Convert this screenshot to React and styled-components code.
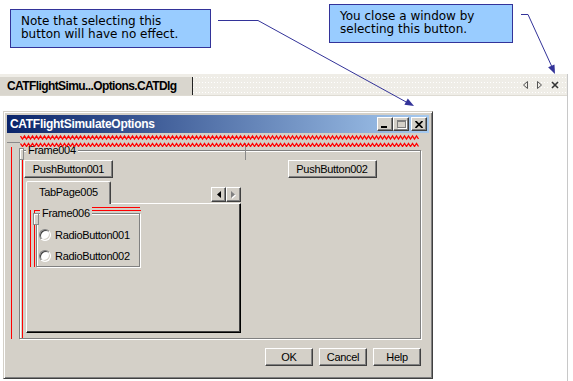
import React from "react";
import styled, { createGlobalStyle } from "styled-components";

const GlobalStyle = createGlobalStyle`
  * { box-sizing: border-box; }
  html, body { margin: 0; padding: 0; background: #fff; }
  body { font-family: "Liberation Sans", Arial, sans-serif; overflow: hidden; }
`;

const FACE = "#d4d0c8";
const GUIDE = "#ff0000";

const Page = styled.div`
  position: relative;
  width: 573px;
  height: 381px;
  overflow: hidden;
  background: #fff;
`;

/* ---------- callouts ---------- */

const CalloutRow = styled.div`
  display: flex;
  align-items: flex-start;
  height: 74px;
`;

const Callout = styled.div`
  margin: ${(p) => p.$top}px 0 0 ${(p) => p.$left}px;
  width: ${(p) => p.$width}px;
  height: 39px;
  padding: 5px 10px;
  background: #99ccff;
  border: 1px solid #333399;
  font-family: "DejaVu Sans", Verdana, sans-serif;
  font-size: 12px;
  line-height: 13px;
  color: #000;
`;

const ArrowLayer = styled.svg`
  position: absolute;
  top: 0;
  left: 0;
  z-index: 10;
  pointer-events: none;
`;

/* ---------- workspace + document tab ---------- */

const Workspace = styled.div`
  width: 568px;
  height: 307px;
  border-right: 1px solid #c8c8c8;
  display: flex;
  flex-direction: column;
`;

const DocTabBar = styled.div`
  display: flex;
  align-items: center;
  height: 22px;
  flex: none;
  background-color: #efede7;
  background-image: radial-gradient(circle, #ffffff 0.7px, transparent 0.9px);
  background-size: 3px 5px;
  background-position: 0 1px;
  border-bottom: 1px solid #dedbd3;
`;

const DocTab = styled.div`
  align-self: flex-end;
  width: 193px;
  height: 18px;
  padding-left: 7px;
  background: #d9d6ce;
  border-right: 1px solid #222;
  font-weight: bold;
  font-size: 12px;
  letter-spacing: -0.6px;
  line-height: 18px;
  color: #000;
  white-space: nowrap;
`;

const TabControls = styled.div`
  margin-left: auto;
  padding-right: 8px;
  display: flex;
  align-items: center;
  gap: 9px;
`;

const Canvas = styled.div`
  flex: 1;
  padding: 15px 0 0 3px;
`;

/* ---------- dialog frame ---------- */

const Dialog = styled.div`
  width: 430px;
  height: 268px;
  padding: 3px;
  background: ${FACE};
  border: 1px solid;
  border-color: ${FACE} #404040 #404040 ${FACE};
  box-shadow: inset 1px 1px 0 #fff, inset -1px -1px 0 #808080;
  display: flex;
  flex-direction: column;
`;

const TitleBar = styled.div`
  height: 18px;
  flex: none;
  display: flex;
  align-items: center;
  padding: 0 2px 0 3px;
  background: linear-gradient(90deg, #0a246a, #a6caf0);
  color: #fff;
  font-weight: bold;
  font-size: 12px;
  letter-spacing: -0.3px;
`;

const CaptionButtons = styled.div`
  margin-left: auto;
  display: flex;
`;

const CaptionButton = styled.div`
  width: 16px;
  height: 14px;
  margin-left: ${(p) => p.$gap || 0}px;
  background: ${FACE};
  border: 1px solid;
  border-color: #fff #404040 #404040 #fff;
  box-shadow: inset -1px -1px 0 #808080;
  display: flex;
  align-items: ${(p) => p.$align || "center"};
  justify-content: center;
  padding-bottom: ${(p) => (p.$align === "flex-end" ? 2 : 0)}px;
`;

const MinGlyph = styled.span`
  width: 6px;
  height: 2px;
  margin-right: 3px;
  background: #000;
`;

const MaxGlyph = styled.span`
  width: 9px;
  height: 8px;
  border: 1px solid #808080;
  border-top-width: 2px;
  box-shadow: 1px 1px 0 #fff;
`;

const DialogBody = styled.div`
  flex: 1;
  display: flex;
  flex-direction: column;
`;

/* ---------- layout guides drawn by the dialog editor ---------- */

const ZigzagStrip = styled.div`
  position: relative;
  z-index: 2;
  height: 14px;
  flex: none;
  display: flex;
  align-items: flex-start;
`;

const Stub = styled.span`
  width: 13px;
  height: 1px;
  margin-top: 9px;
  background: #8a8a8a;
`;

const BodyMain = styled.div`
  height: 192px;
  flex: none;
  display: flex;
`;

const OuterGuide = styled.div`
  margin-left: 4px;
  padding: 3px 0 0 7px;
  border-left: 1px solid ${GUIDE};
`;

const GroupBox = styled.div`
  position: relative;
  width: ${(p) => (p.$width ? `${p.$width}px` : "auto")};
  margin: ${(p) => p.$margin || 0};
  border: 1px solid #808080;
  box-shadow: 1px 1px 0 #fff, inset 1px 1px 0 #fff;
`;

const GroupLabel = styled.div`
  position: relative;
  width: fit-content;
  margin: -7px 0 0 ${(p) => p.$indent}px;
  padding: 0 2px;
  background: ${FACE};
  font-size: 11px;
  line-height: 13px;
  letter-spacing: -0.3px;
  color: #000;
`;

const Handle = styled.span`
  position: absolute;
  left: ${(p) => p.$x}px;
  top: ${(p) => p.$y}px;
  width: ${(p) => p.$w}px;
  height: ${(p) => p.$h}px;
  border: 1px solid #8a8a8a;
  box-shadow: inset 1px 1px 0 #fff;
  background: ${FACE};
`;

const FrameGrid = styled.div`
  display: grid;
  grid-template-columns: 225px 1fr;
  padding-top: 3px;
`;

const LeftColumn = styled.div`
  margin-left: 2px;
  border-left: 1px solid ${GUIDE};
  display: flex;
  flex-direction: column;
  align-items: flex-start;
`;

const RightColumn = styled.div`
  position: relative;
  display: flex;
  justify-content: center;
  align-items: flex-start;
  padding-right: 1px;

  &::before {
    content: "";
    position: absolute;
    left: 0;
    top: -17px;
    width: 1px;
    height: 17px;
    background: #8a8a8a;
  }
`;

const PushButton = styled.div`
  width: ${(p) => p.$w}px;
  height: 18px;
  margin-left: ${(p) => p.$ml || 0}px;
  border: 1px solid;
  border-color: #fff #404040 #404040 #fff;
  box-shadow: inset -1px -1px 0 #808080;
  background: ${FACE};
  display: flex;
  align-items: center;
  justify-content: center;
  font-size: 11px;
  letter-spacing: -0.3px;
  color: #000;
`;

/* ---------- tab widget ---------- */

const TabWidget = styled.div`
  width: 215px;
  margin: 3px 0 5px 3px;
`;

const TabStrip = styled.div`
  height: 22px;
  display: flex;
  align-items: flex-end;
`;

const Tab = styled.div`
  position: relative;
  z-index: 1;
  height: 23px;
  margin-bottom: -1px;
  padding: 0 12px;
  background: ${FACE};
  border: 1px solid;
  border-bottom: none;
  border-color: #fff #404040 transparent #fff;
  border-radius: 2px 2px 0 0;
  box-shadow: inset -1px 0 0 #808080;
  font-size: 11px;
  line-height: 21px;
  letter-spacing: -0.3px;
  color: #000;
`;

const ScrollButtons = styled.div`
  margin: 0 0 1px auto;
  display: flex;
`;

const ScrollButton = styled.div`
  width: 15px;
  height: 15px;
  background: ${FACE};
  border: 1px solid;
  border-color: #fff #404040 #404040 #fff;
  box-shadow: inset -1px -1px 0 #808080;
  display: flex;
  align-items: center;
  justify-content: center;
`;

const TabPanel = styled.div`
  height: 130px;
  border: 1px solid;
  border-color: #fff #000 #000 #fff;
  box-shadow: inset -1px -1px 0 #404040;
`;

const GuideOuter = styled.div`
  position: relative;
  width: 111px;
  margin: 6px 0 0 3px;
  border-left: 1px solid ${GUIDE};

  &::before {
    content: "";
    position: absolute;
    top: -3px;
    left: 9px;
    right: 1px;
    height: 1px;
    background: ${GUIDE};
  }
`;

const GuideInner = styled.div`
  position: relative;
  margin-left: 3px;
  border-left: 1px solid ${GUIDE};
  border-top: 1px solid ${GUIDE};
  padding-top: 2px;
`;

const RadioList = styled.div`
  padding-top: 4px;
`;

const RadioRow = styled.div`
  height: 21px;
  padding-left: 2px;
  display: flex;
  align-items: center;
  gap: 4px;
  font-size: 11px;
  letter-spacing: -0.3px;
  color: #000;
`;

const RadioCircle = styled.span`
  width: 12px;
  height: 12px;
  border-radius: 50%;
  border: 1px solid;
  border-color: #808080 #fff #fff #808080;
  box-shadow: inset 1px 1px 0 #404040, inset -1px -1px 0 ${FACE};
  background: #fff;
`;

const Footer = styled.div`
  margin-top: 9px;
  padding-right: 8px;
  display: flex;
  justify-content: flex-end;
  gap: 6px;
`;

/* ---------- helpers ---------- */

const zigzag = (y, width) => {
  const pts = [];
  for (let x = 0.5, i = 0; x <= width; x += 2, i++) {
    pts.push(`${x},${y + (i % 2 ? 1.5 : -1.5)}`);
  }
  return pts.join(" ");
};

function Arrows() {
  return (
    <ArrowLayer width="573" height="381" viewBox="0 0 573 381">
      <g stroke="#333399" strokeWidth="1" fill="none">
        <path d="M218 20.5 H258 L408 103" />
        <path d="M521 14.5 H528 L552 67" />
      </g>
      <g fill="#333399">
        <polygon points="414,106 404.4,104.7 407.8,98.6" />
        <polygon points="555,74 548.1,67.2 554.5,64.4" />
      </g>
    </ArrowLayer>
  );
}

export default function App() {
  return (
    <Page>
      <GlobalStyle />
      <CalloutRow>
        <Callout $top={9} $left={10} $width={201}>
          Note that selecting this
          <br />
          button will have no effect.
        </Callout>
        <Callout $top={4} $left={118} $width={184}>
          You close a window by
          <br />
          selecting this button.
        </Callout>
      </CalloutRow>

      <Workspace>
        <DocTabBar>
          <DocTab>CATFlightSimu...Options.CATDlg</DocTab>
          <TabControls>
            <svg width="5" height="8" viewBox="0 0 5 8">
              <polygon points="4.5,0.5 0.5,4 4.5,7.5" fill="none" stroke="#555" />
            </svg>
            <svg width="5" height="8" viewBox="0 0 5 8">
              <polygon points="0.5,0.5 4.5,4 0.5,7.5" fill="none" stroke="#555" />
            </svg>
            <svg width="8" height="8" viewBox="0 0 8 8">
              <path d="M1 1 L7 7 M7 1 L1 7" stroke="#333" strokeWidth="1.6" />
            </svg>
          </TabControls>
        </DocTabBar>

        <Canvas>
          <Dialog>
            <TitleBar>
              CATFlightSimulateOptions
              <CaptionButtons>
                <CaptionButton $align="flex-end">
                  <MinGlyph />
                </CaptionButton>
                <CaptionButton>
                  <MaxGlyph />
                </CaptionButton>
                <CaptionButton $gap={2}>
                  <svg width="8" height="7" viewBox="0 0 8 7">
                    <path d="M0.5 0 L7.5 7 M7.5 0 L0.5 7" stroke="#000" strokeWidth="1.7" />
                  </svg>
                </CaptionButton>
              </CaptionButtons>
            </TitleBar>

            <DialogBody>
              <ZigzagStrip>
                <Stub />
                <svg width="401" height="14" viewBox="0 0 401 14">
                  <polyline points={zigzag(4.5, 400)} fill="none" stroke={GUIDE} strokeWidth="1.3" />
                  <polyline points={zigzag(12, 400)} fill="none" stroke={GUIDE} strokeWidth="1.3" />
                </svg>
              </ZigzagStrip>

              <BodyMain>
                <OuterGuide>
                  <GroupBox $width={402}>
                    <Handle $x={-1} $y={-3} $w={5} $h={12} />
                    <GroupLabel $indent={6}>Frame004</GroupLabel>
                    <FrameGrid>
                      <LeftColumn>
                        <PushButton $w={89} $ml={1}>
                          PushButton001
                        </PushButton>
                        <TabWidget>
                          <TabStrip>
                            <Tab>TabPage005</Tab>
                            <ScrollButtons>
                              <ScrollButton>
                                <svg width="4" height="7" viewBox="0 0 4 7">
                                  <polygon points="4,0 0,3.5 4,7" fill="#000" />
                                </svg>
                              </ScrollButton>
                              <ScrollButton>
                                <svg width="5" height="8" viewBox="0 0 5 8">
                                  <polygon points="1,1 5,4.5 1,8" fill="#fff" />
                                  <polygon points="0,0 4,3.5 0,7" fill="#808080" />
                                </svg>
                              </ScrollButton>
                            </ScrollButtons>
                          </TabStrip>
                          <TabPanel>
                            <GuideOuter>
                              <GuideInner>
                                <GroupBox $margin="0 1px 0 1px">
                                  <Handle $x={-4} $y={-1} $w={6} $h={12} />
                                  <GroupLabel $indent={3}>Frame006</GroupLabel>
                                  <RadioList>
                                    <RadioRow>
                                      <RadioCircle />
                                      RadioButton001
                                    </RadioRow>
                                    <RadioRow>
                                      <RadioCircle />
                                      RadioButton002
                                    </RadioRow>
                                  </RadioList>
                                </GroupBox>
                              </GuideInner>
                            </GuideOuter>
                          </TabPanel>
                        </TabWidget>
                      </LeftColumn>
                      <RightColumn>
                        <PushButton $w={89}>PushButton002</PushButton>
                      </RightColumn>
                    </FrameGrid>
                  </GroupBox>
                </OuterGuide>
              </BodyMain>

              <Footer>
                <PushButton $w={48}>OK</PushButton>
                <PushButton $w={48}>Cancel</PushButton>
                <PushButton $w={48}>Help</PushButton>
              </Footer>
            </DialogBody>
          </Dialog>
        </Canvas>
      </Workspace>
      <Arrows />
    </Page>
  );
}
